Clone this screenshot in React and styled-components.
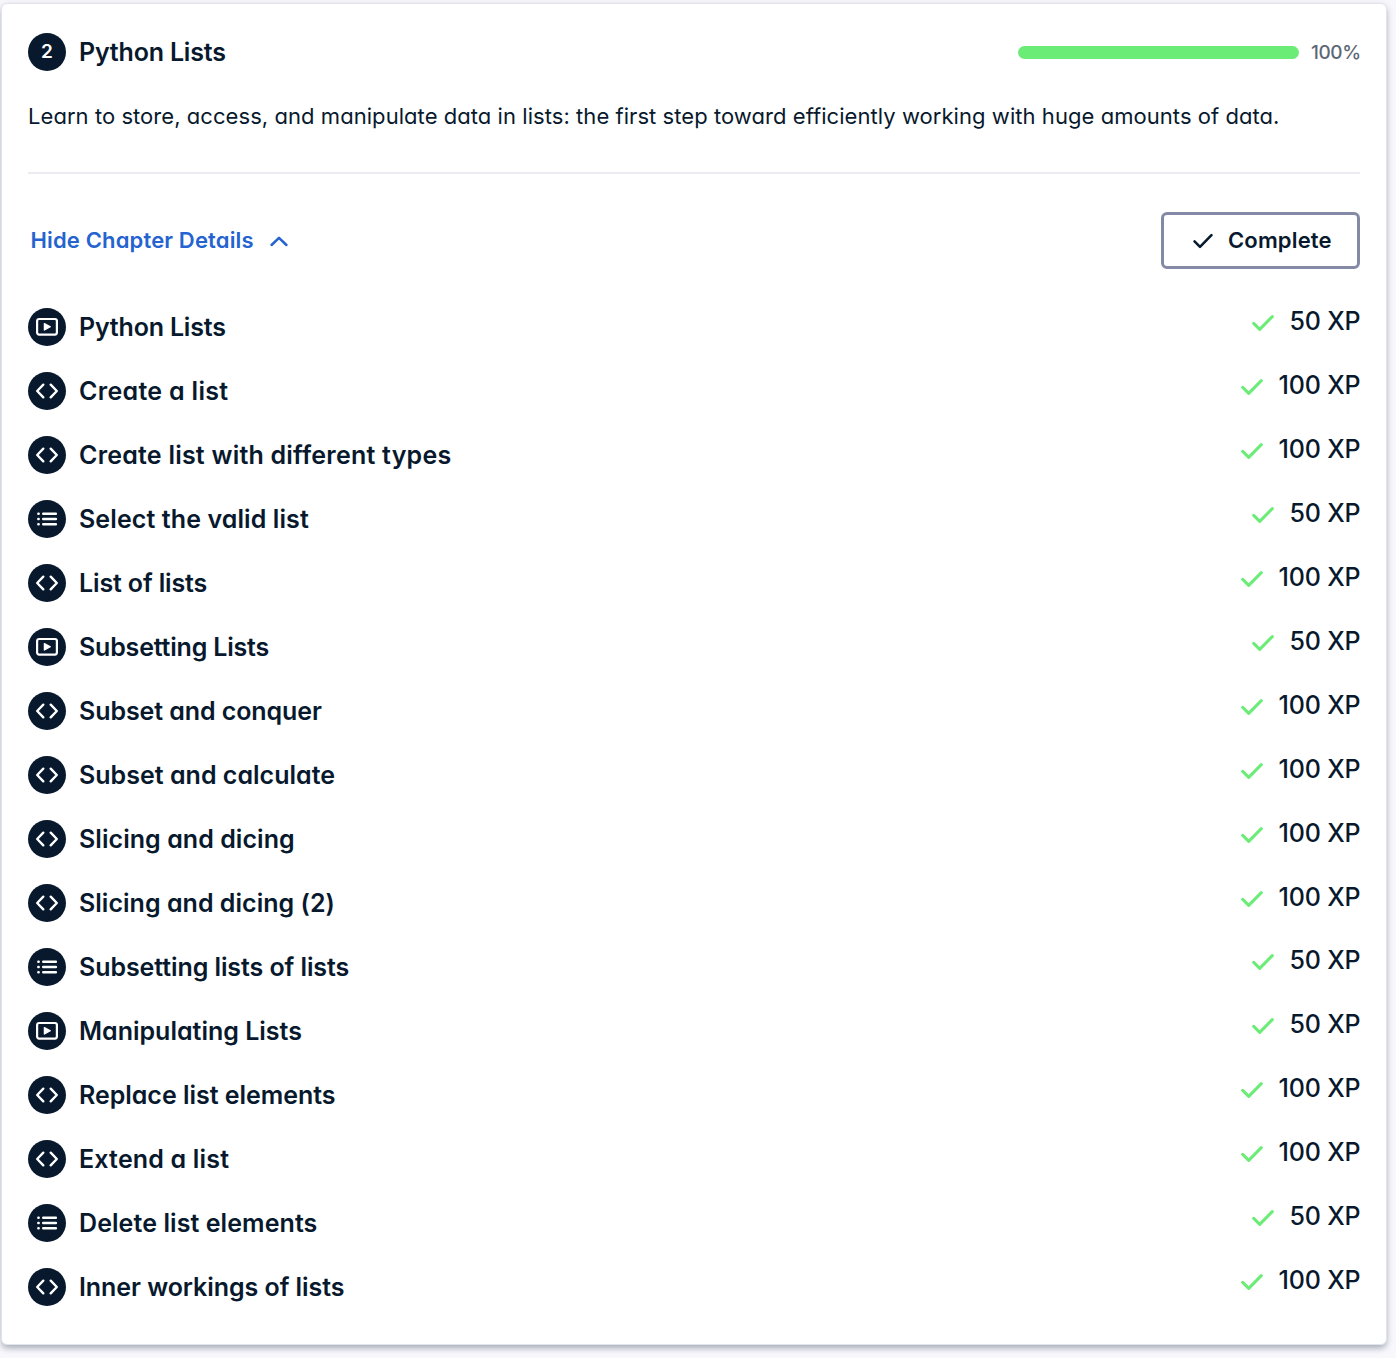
import React from 'react';
import styled, { createGlobalStyle } from 'styled-components';

const navy = '#08192d';
const green = '#6bec76';

const GlobalStyle = createGlobalStyle`
  * { box-sizing: border-box; }
  body {
    margin: 0;
    background: #f7f7fc;
    color: ${navy};
    font-family: Inter, "Liberation Sans", sans-serif;
    font-feature-settings: "cv11";
  }
`;

const Page = styled.main`
  height: 1358px;
  padding: 3px 9px 13px 1px;
  overflow: hidden;
`;

const Card = styled.section`
  height: 1342px;
  padding: 29.3px 26px 0;
  border: 1px solid #e3e3ed;
  border-radius: 6px;
  background: #fff;
  box-shadow: 0 4px 6px -1px rgba(5, 25, 45, 0.3), 0 1px 8px rgba(5, 25, 45, 0.08);
`;

const Header = styled.header`
  display: flex;
  align-items: center;
  height: 38px;
`;

const Badge = styled.span`
  display: flex;
  flex: none;
  align-items: center;
  justify-content: center;
  width: 38px;
  height: 38px;
  border-radius: 50%;
  background: ${navy};
  color: #fff;
  font-size: 19px;
  font-weight: 600;
  line-height: 36px;
`;

const Title = styled.span`
  margin-left: 13px;
  font-size: 25px;
  font-weight: 600;
  line-height: 38px;
  white-space: nowrap;
  letter-spacing: ${(p) => p.$tracking || 0}px;
`;

const Track = styled.div`
  width: 281px;
  height: 13px;
  margin: 1px 12px 0 auto;
  border-radius: 7px;
  background: ${green};
`;

const Percent = styled.span`
  width: 49px;
  color: #5c6875;
  font-size: 19px;
  font-weight: 500;
  letter-spacing: -0.4px;
  white-space: nowrap;
`;

const Description = styled.p`
  margin: 28px 0 0;
  padding-bottom: 39px;
  border-bottom: 2px solid #ebebf1;
  font-size: 22px;
  line-height: 34px;
  letter-spacing: 0.055px;
  white-space: nowrap;
`;

const Actions = styled.div`
  display: flex;
  align-items: center;
  justify-content: space-between;
  margin-top: 38px;
`;

const Toggle = styled.button`
  display: flex;
  align-items: center;
  gap: 16px;
  padding: 0 0 2px 2.5px;
  border: 0;
  background: none;
  color: #2563d0;
  font: inherit;
  font-size: 22px;
  font-weight: 600;
  letter-spacing: 0.15px;
`;

const CompleteButton = styled.button`
  display: flex;
  align-items: center;
  gap: 15px;
  width: 199px;
  height: 57px;
  padding: 0 0 2px 29px;
  border: 3px solid #848aa6;
  border-radius: 6px;
  background: #fff;
  color: ${navy};
  font: inherit;
  font-size: 22px;
  font-weight: 600;
  letter-spacing: 0.15px;
`;

const List = styled.ul`
  margin: 39.15px 0 0;
  padding: 0;
  list-style: none;
`;

const Item = styled.li`
  display: flex;
  align-items: flex-start;
  height: 63.96px;
`;

const Reward = styled.span`
  display: flex;
  align-items: center;
  gap: 16px;
  margin: -0.5px -0.5px 0 auto;
  font-size: 25px;
  font-weight: 500;
  line-height: 26px;
  letter-spacing: -0.15px;
  white-space: nowrap;
`;

const Icon = styled.svg`
  display: block;
  flex: none;
  fill: none;
  stroke: currentColor;
  stroke-width: ${(p) => p.$weight || 2.4};
  stroke-linecap: round;
  stroke-linejoin: round;
`;

const RewardCheck = styled(Icon)`
  margin-top: 5px;
  margin-right: ${(p) => (p.$short ? -1 : 0)}px;
  color: ${green};
`;

const ButtonCheck = styled(Icon)`
  margin-top: 2px;
`;

const ToggleChevron = styled(Icon)`
  margin-top: 2px;
`;

const checkPath = 'M1.7 8.4 7.7 14.4 20.3 1.6';

const glyphs = {
  video: (
    <Icon width="24" height="20" viewBox="0 0 24 20" $weight={2.2}>
      <rect x="2.1" y="2" width="19.8" height="15.6" rx="2" />
      <path d="M9.4 6.6v6.4l5.9-3.2z" fill="currentColor" strokeWidth="1.3" />
    </Icon>
  ),
  code: (
    <Icon width="24" height="20" viewBox="0 0 24 20">
      <path d="M8.3 3.7 2.2 10l6.1 6.3M15.7 3.7l6.1 6.3-6.1 6.3" />
    </Icon>
  ),
  list: (
    <Icon width="24" height="20" viewBox="0 0 24 20">
      <path d="M8.2 4.7h12.7M8.2 10h12.7M8.2 15.3h12.7M3.3 4.7h.4M3.3 10h.4M3.3 15.3h.4" />
    </Icon>
  ),
};

const exercises = [
  ['video', 'Python Lists', 50, -0.19],
  ['code', 'Create a list', 100, 0.31],
  ['code', 'Create list with different types', 100, 0.22],
  ['list', 'Select the valid list', 50, 0.1],
  ['code', 'List of lists', 100, -0.14],
  ['video', 'Subsetting Lists', 50, -0.19],
  ['code', 'Subset and conquer', 100, -0.08],
  ['code', 'Subset and calculate', 100, 0.02],
  ['code', 'Slicing and dicing', 100, 0.06],
  ['code', 'Slicing and dicing (2)', 100, 0.03],
  ['list', 'Subsetting lists of lists', 50, -0.08],
  ['video', 'Manipulating Lists', 50, 0],
  ['code', 'Replace list elements', 100, -0.03],
  ['code', 'Extend a list', 100, 0.18],
  ['list', 'Delete list elements', 50, 0.08],
  ['code', 'Inner workings of lists', 100, -0.06],
];

export default function App() {
  return (
    <Page>
      <GlobalStyle />
      <Card>
        <Header>
          <Badge>2</Badge>
          <Title $tracking={-0.19}>Python Lists</Title>
          <Track />
          <Percent>100%</Percent>
        </Header>
        <Description>
          Learn to store, access, and manipulate data in lists: the first step toward efficiently working with huge amounts of data.
        </Description>
        <Actions>
          <Toggle>
            Hide Chapter Details
            <ToggleChevron width="18" height="12" viewBox="0 0 18 12" $weight={2.5}>
              <path d="M1.6 10 9 2.8l7.4 7.2" />
            </ToggleChevron>
          </Toggle>
          <CompleteButton>
            <ButtonCheck width="20" height="16" viewBox="0 0 22 16" $weight={2.8}>
              <path d={checkPath} />
            </ButtonCheck>
            Complete
          </CompleteButton>
        </Actions>
        <List>
          {exercises.map(([kind, name, xp, tracking]) => (
            <Item key={name}>
              <Badge>{glyphs[kind]}</Badge>
              <Title $tracking={tracking}>{name}</Title>
              <Reward>
                <RewardCheck width="22" height="17" viewBox="0 0 22 17" $weight={3} $short={xp < 100}>
                  <path d={checkPath} />
                </RewardCheck>
                {xp} XP
              </Reward>
            </Item>
          ))}
        </List>
      </Card>
    </Page>
  );
}
